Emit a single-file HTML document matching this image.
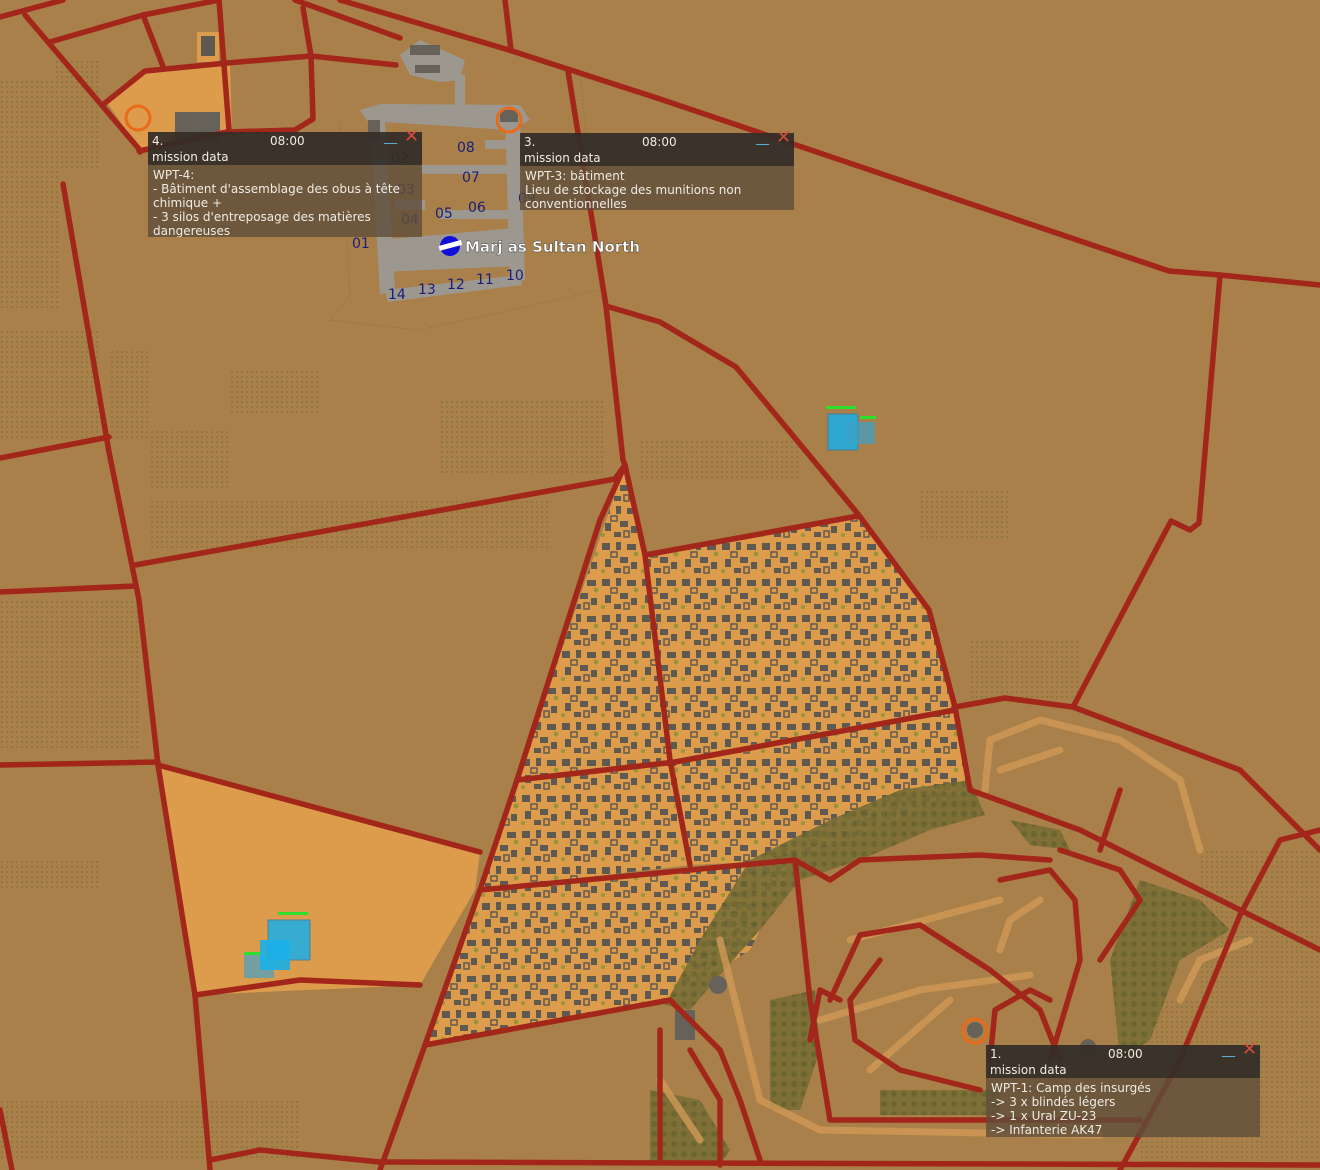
<!DOCTYPE html>
<html><head><meta charset="utf-8"><style>
html,body{margin:0;padding:0;width:1320px;height:1170px;overflow:hidden;background:#a9804a}
svg{position:absolute;left:0;top:0}
.box{position:absolute;font-family:"DejaVu Sans","Liberation Sans",sans-serif;font-size:12px;color:#f0ece4;line-height:14px}
.hd{background:rgba(50,44,38,0.92);height:33px;position:relative;padding:2px 4px;box-sizing:border-box}
.bd{background:rgba(95,78,58,0.82);padding:3px 5px;box-sizing:border-box;overflow:hidden}
.t{position:absolute;top:2px}
.mn{position:absolute;top:-1px;color:#5ab4e0;font-size:13px}
.x{position:absolute;top:-2px;color:#d84a3a;font-size:18px}
.rw{font-family:"DejaVu Sans",sans-serif;font-size:14px;fill:#1a1e7a}
</style></head><body>
<svg width="1320" height="1170" viewBox="0 0 1320 1170">
<defs>
<pattern id="bld" width="40" height="36" patternUnits="userSpaceOnUse">
<rect width="40" height="36" fill="#dc9c4c"/>
<g fill="#5e5a52">
<rect x="2" y="3" width="8" height="7"/>
<rect x="16" y="2" width="5" height="8"/>
<rect x="27" y="4" width="9" height="6"/>
<rect x="5" y="19" width="6" height="8"/>
<rect x="20" y="17" width="8" height="6"/>
<rect x="31" y="22" width="6" height="7"/>
<rect x="14" y="28" width="7" height="5"/>
</g>
<g fill="none" stroke="#5e5a52" stroke-width="1.5">
<rect x="11" y="12" width="6" height="5"/>
<rect x="24" y="27" width="5" height="6"/>
</g>
<circle cx="36" cy="14" r="2.5" fill="#9a9438"/>
<circle cx="3" cy="31" r="2" fill="#9a9438"/>
</pattern>
<pattern id="fld" width="5" height="5" patternUnits="userSpaceOnUse">
<rect x="1" y="1" width="2" height="2" fill="#7d7034"/>
</pattern>
<pattern id="frs" width="10" height="10" patternUnits="userSpaceOnUse">
<rect width="10" height="10" fill="#7a6e36"/>
<circle cx="4" cy="4" r="3" fill="#66632e"/>
</pattern>
</defs>
<!-- fields -->
<g opacity="0.55">
<rect x="0" y="80" width="60" height="230" fill="url(#fld)"/>
<rect x="55" y="60" width="45" height="110" fill="url(#fld)"/>
<rect x="0" y="330" width="100" height="110" fill="url(#fld)"/>
<rect x="110" y="350" width="40" height="90" fill="url(#fld)"/>
<rect x="230" y="370" width="90" height="45" fill="url(#fld)"/>
<rect x="150" y="430" width="80" height="60" fill="url(#fld)"/>
<rect x="440" y="400" width="165" height="75" fill="url(#fld)"/>
<rect x="150" y="500" width="400" height="50" fill="url(#fld)"/>
<rect x="0" y="600" width="140" height="150" fill="url(#fld)"/>
<rect x="0" y="860" width="100" height="30" fill="url(#fld)"/>
<rect x="0" y="1100" width="300" height="60" fill="url(#fld)"/>
<rect x="640" y="440" width="160" height="40" fill="url(#fld)"/>
<rect x="920" y="490" width="90" height="50" fill="url(#fld)"/>
<rect x="970" y="640" width="110" height="60" fill="url(#fld)"/>
<rect x="1200" y="850" width="120" height="310" fill="url(#fld)"/>
<rect x="1140" y="1000" width="80" height="160" fill="url(#fld)"/>
</g>
<!-- orange areas -->
<path d="M105,100 L145,72 L230,65 L232,135 L140,150 Z" fill="#dc9c4c"/>
<rect x="197" y="32" width="22" height="30" fill="#dc9c4c"/>
<rect x="201" y="36" width="14" height="20" fill="#5e5a52"/>
<path d="M160,765 L480,852 L475,890 L420,985 L195,995 Z" fill="#dc9c4c"/>
<path d="M625,465 L645,555 L670,760 L517,780 Z" fill="url(#bld)"/>
<path d="M645,555 L858,516 L929,610 L955,707 L670,760 Z" fill="url(#bld)"/>
<path d="M517,780 L675,762 L690,865 L480,890 Z" fill="url(#bld)"/>
<path d="M675,762 L955,710 L970,790 L795,860 L690,865 Z" fill="url(#bld)"/>
<path d="M480,890 L795,860 L750,950 L670,1000 L425,1045 Z" fill="url(#bld)"/>
<!-- forest -->
<g opacity="0.9">
<path d="M750,860 L830,820 L900,790 L970,780 L985,815 L930,830 L860,860 L800,880 L760,930 L720,975 L690,1010 L665,1005 L700,940 Z" fill="url(#frs)"/>
<path d="M1140,880 L1200,900 L1230,930 L1180,960 L1150,1040 L1120,1060 L1110,960 Z" fill="url(#frs)"/>
<path d="M650,1090 L700,1100 L730,1150 L720,1165 L650,1165 Z" fill="url(#frs)"/>
<path d="M770,1000 L815,990 L820,1050 L800,1110 L770,1110 Z" fill="url(#frs)"/>
<path d="M1010,820 L1060,830 L1070,850 L1030,845 Z" fill="url(#frs)"/>
<path d="M880,1090 L1000,1090 L1000,1115 L880,1115 Z" fill="url(#frs)"/>
</g>
<!-- camp tracks -->
<g fill="none" stroke="#d19a56" stroke-width="7" stroke-linecap="round" opacity="0.8">
<path d="M985,790 L990,740 L1040,720 L1120,740 L1180,780 L1200,850"/>
<path d="M1000,770 L1060,750"/>
<path d="M850,940 L1000,900"/>
<path d="M820,1020 L920,990 L1030,975"/>
<path d="M870,1070 L950,1000"/>
<path d="M1180,1000 L1200,960 L1250,940"/>
<path d="M1000,950 L1010,920 L1040,900"/>
<path d="M720,940 L760,1100 L820,1130 L1100,1135"/>
<path d="M660,1080 L700,1140"/>
</g>
<!-- airport -->
<g fill="#9c9890">
<path d="M360,110 L380,104 L520,105 L530,120 L510,130 L385,122 L370,125 Z"/>
<path d="M370,120 L385,120 L395,290 L380,295 Z"/>
<path d="M505,115 L520,115 L525,280 L510,282 Z"/>
<path d="M380,240 L515,228 L517,266 L382,272 Z"/>
<path d="M385,290 L520,275 L522,285 L388,302 Z"/>
<path d="M400,55 L420,40 L465,60 L460,80 L440,82 L410,75 Z"/>
<rect x="455" y="75" width="10" height="40"/>
<rect x="395" y="200" width="30" height="10"/>
<rect x="420" y="165" width="100" height="9"/>
<rect x="440" y="210" width="80" height="9"/>
<rect x="485" y="140" width="35" height="9"/>
</g>
<g fill="#666259">
<rect x="410" y="45" width="30" height="10"/><rect x="415" y="65" width="25" height="8"/>
<rect x="368" y="120" width="12" height="20"/>
<rect x="175" y="112" width="45" height="30"/>
<rect x="500" y="110" width="18" height="12"/>
<circle cx="718" cy="985" r="9"/><circle cx="975" cy="1030" r="8"/><circle cx="1088" cy="1047" r="8"/>
<rect x="675" y="1010" width="20" height="30"/>
</g>
<path d="M340,120 L350,295 L330,320 L420,330 L600,290 L580,70" fill="none" stroke="#8a6a40" stroke-width="1" stroke-dasharray="2 2" opacity="0.6"/>
<!-- roads -->
<g fill="none" stroke="#a3261a" stroke-width="5.5" stroke-linejoin="round" stroke-linecap="round">
<path d="M0,17 L63,0"/>
<path d="M25,15 L139,149 L140,152"/>
<path d="M50,42 L143,15 L219,0"/>
<path d="M219,0 L229,130"/>
<path d="M143,15 L164,69"/>
<path d="M105,103 L145,71 L227,63 L311,56 L396,65"/>
<path d="M311,56 L313,119 L295,130 L227,132 L139,151"/>
<path d="M303,8 L311,56"/>
<path d="M295,0 L400,38"/>
<path d="M340,0 L509,50 L660,99 L1169,271 L1220,275 L1320,285"/>
<path d="M505,0 L511,50"/>
<path d="M568,71 L606,306 L623,460 L625,465"/>
<path d="M606,306 L660,322 L736,367 L858,514 L929,610 L955,707 L970,790"/>
<path d="M1220,275 L1199,523 L1190,530 L1171,521 L1073,707"/>
<path d="M955,707 L1005,698 L1073,707 L1240,770 L1290,820 L1320,850"/>
<path d="M63,184 L109,452 L139,600 L158,765 L195,995 L210,1170"/>
<path d="M0,458 L109,437"/>
<path d="M135,565 L615,479 L625,465"/>
<path d="M0,592 L135,586"/>
<path d="M0,765 L158,762"/>
<path d="M0,1110 L12,1170"/>
<path d="M625,465 L600,520 L517,780 L480,890 L425,1045 L380,1170"/>
<path d="M625,465 L645,555 L670,760 L690,865"/>
<path d="M645,555 L858,516"/>
<path d="M517,780 L675,762 L955,710"/>
<path d="M480,890 L795,860 L830,880 L860,860 L980,855 L1050,860"/>
<path d="M158,765 L480,852"/>
<path d="M195,995 L300,980 L420,985"/>
<path d="M425,1045 L670,1000 L720,1050"/>
<path d="M970,790 L1080,830 L1250,915 L1320,950"/>
<path d="M1320,830 L1280,840 L1240,915 L1180,1060 L1120,1170"/>
<path d="M795,860 L810,1000 L820,1060 L830,1120"/>
<path d="M840,1000 L820,990 L810,1040"/>
<path d="M830,1000 L860,935 L920,925 L990,970 L1040,1010 L1060,1060"/>
<path d="M880,960 L850,1000 L855,1040 L900,1070 L980,1090"/>
<path d="M990,1060 L995,1010 L1030,990 L1050,1000"/>
<path d="M1000,880 L1050,870 L1075,900 L1080,960 L1050,1060"/>
<path d="M1060,850 L1120,870 L1140,900 L1100,960"/>
<path d="M1120,790 L1100,850"/>
<path d="M210,1160 L260,1150 L380,1162 L1320,1165"/>
<path d="M720,1050 L740,1100 L760,1160"/>
<path d="M690,1050 L720,1100 L720,1165"/>
<path d="M830,1120 L1140,1120"/>
<path d="M660,1030 L660,1160"/>
</g>
<!-- units -->
<g>
<rect x="826" y="406" width="30" height="3" fill="#2ee02e"/>
<rect x="860" y="416" width="16" height="3" fill="#2ee02e"/>
<rect x="828" y="414" width="30" height="36" fill="#1ab0e8" stroke="#3a7aa0" opacity="0.85"/>
<rect x="845" y="422" width="30" height="22" fill="#3aa0c8" opacity="0.7"/>
<rect x="278" y="912" width="30" height="3" fill="#2ee02e"/>
<rect x="244" y="952" width="16" height="3" fill="#2ee02e"/>
<rect x="268" y="920" width="42" height="40" fill="#1ab0e8" stroke="#3a7aa0" opacity="0.85"/>
<rect x="244" y="955" width="30" height="23" fill="#5aa0b8" opacity="0.8"/>
<rect x="260" y="940" width="30" height="30" fill="#1ab0e8" opacity="0.9"/>
</g>
<!-- waypoint circles -->
<g fill="none" stroke="#e86a1a" stroke-width="3">
<circle cx="138" cy="118" r="12"/><circle cx="509" cy="120" r="12"/><circle cx="975" cy="1031" r="12"/>
</g>
<!-- runway labels -->
<text class="rw" x="391" y="163">02</text><text class="rw" x="457" y="152">08</text>
<text class="rw" x="397" y="194">03</text><text class="rw" x="462" y="182">07</text>
<text class="rw" x="401" y="224">04</text><text class="rw" x="435" y="218">05</text><text class="rw" x="468" y="212">06</text>
<text class="rw" x="518" y="203">09</text><text class="rw" x="352" y="248">01</text>
<text class="rw" x="388" y="299">14</text><text class="rw" x="418" y="294">13</text><text class="rw" x="447" y="289">12</text><text class="rw" x="476" y="284">11</text><text class="rw" x="506" y="280">10</text>
<circle cx="450" cy="246" r="10" fill="#1010d8"/>
<rect x="439" y="243" width="23" height="5" fill="#fff" transform="rotate(-15 450 246)"/>
<text x="465" y="252" font-family="DejaVu Sans,sans-serif" font-weight="bold" font-size="15" fill="#fff" stroke="#333" stroke-width="0.4">Marj as Sultan North</text>
</svg>

<div class="box" style="left:148px;top:132px;width:274px">
<div class="hd"><span>4.</span><span class="t" style="left:122px">08:00</span><span class="mn" style="left:236px">__</span><span class="x" style="left:256px">✕</span><br><span style="position:absolute;top:18px;left:4px">mission data</span></div>
<div class="bd" style="height:72px">WPT-4:<br>- Bâtiment d'assemblage des obus à tête<br>chimique +<br>- 3 silos d'entreposage des matières<br>dangereuses</div>
</div>
<div class="box" style="left:520px;top:133px;width:274px">
<div class="hd"><span>3.</span><span class="t" style="left:122px">08:00</span><span class="mn" style="left:236px">__</span><span class="x" style="left:256px">✕</span><br><span style="position:absolute;top:18px;left:4px">mission data</span></div>
<div class="bd" style="height:44px">WPT-3: bâtiment<br>Lieu de stockage des munitions non<br>conventionnelles</div>
</div>
<div class="box" style="left:986px;top:1045px;width:274px">
<div class="hd"><span>1.</span><span class="t" style="left:122px">08:00</span><span class="mn" style="left:236px">__</span><span class="x" style="left:256px">✕</span><br><span style="position:absolute;top:18px;left:4px">mission data</span></div>
<div class="bd" style="height:59px">WPT-1: Camp des insurgés<br>-&gt; 3 x blindés légers<br>-&gt; 1 x Ural ZU-23<br>-&gt; Infanterie AK47</div>
</div>
</body></html>
